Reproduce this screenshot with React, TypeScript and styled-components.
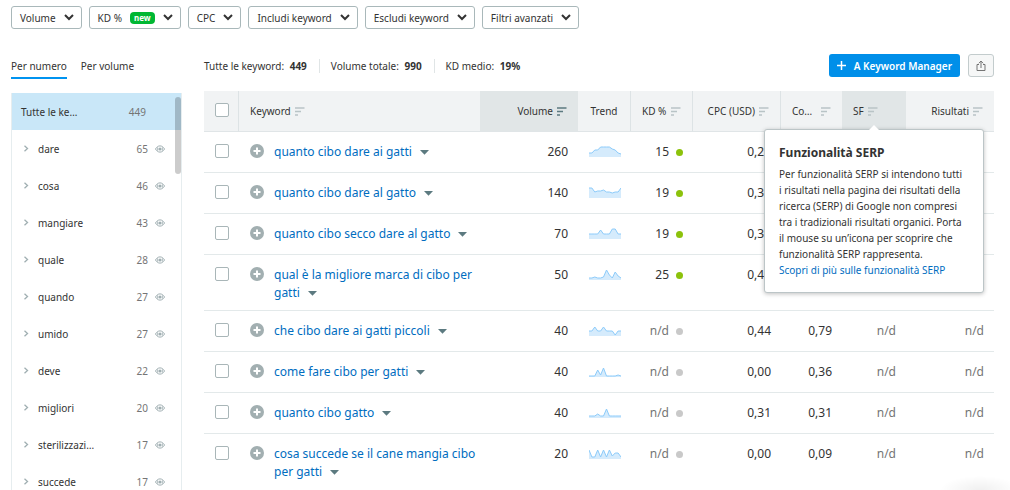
import React from "react";
import styled, { createGlobalStyle } from "styled-components";

const GlobalStyle = createGlobalStyle`
  *, *::before, *::after { box-sizing: border-box; }
  body {
    margin: 0;
    background: #fff;
    color: #333;
    font: 10px/16px "Noto Sans", "Open Sans", sans-serif;
  }
  button, input { font: inherit; color: inherit; margin: 0; }
  button { cursor: pointer; }
  a { color: #006dbf; text-decoration: none; }
`;

const Page = styled.div`
  height: 100vh;
  overflow: hidden;
  padding: 6px 16px 0 11px;
`;

const Filters = styled.div`
  display: flex;
  gap: 7px;
`;

const FilterButton = styled.button`
  display: flex;
  align-items: center;
  gap: 8px;
  height: 23px;
  padding: 0 7px 0 8px;
  border: 1px solid #a9b8ba;
  border-radius: 3px;
  background: #fff;
  white-space: nowrap;
`;

const NewBadge = styled.span`
  padding: 0 4px;
  border-radius: 4px;
  background: #00b733;
  color: #fff;
  font-size: 8px;
  font-weight: 700;
  line-height: 12px;
`;

const Content = styled.div`
  display: flex;
  align-items: flex-start;
  gap: 22px;
  margin-top: 25px;
`;

const Sidebar = styled.aside`
  flex: 0 0 171px;
`;

const Tabs = styled.div`
  display: flex;
  gap: 14px;
`;

const Tab = styled.button<{ $active?: boolean }>`
  height: 25px;
  padding: 0;
  border: 0;
  border-bottom: 2px solid ${(p) => (p.$active ? "#0093f0" : "transparent")};
  background: none;
`;

const GroupPanel = styled.div`
  position: relative;
  margin-top: 14px;
  border: 1px solid #e6edef;
  border-top: 0;
`;

const ScrollThumb = styled.span`
  position: absolute;
  top: 4px;
  right: 0;
  width: 6px;
  height: 77px;
  border-radius: 3px;
  background: rgba(0, 0, 0, 0.2);
`;

const GroupList = styled.ul`
  margin: 0;
  padding: 0;
  list-style: none;
`;

const GroupItem = styled.li<{ $selected?: boolean }>`
  display: flex;
  align-items: center;
  height: 37px;
  padding: 0 ${(p) => (p.$selected ? 35 : 16)}px 0 ${(p) => (p.$selected ? 9 : 11)}px;
  background: ${(p) => (p.$selected ? "#c9e7f8" : "#fff")};
`;

const GroupName = styled.span`
  flex: 1;
`;

const GroupCount = styled.span`
  color: #757575;
`;

const IconButton = styled.button`
  display: flex;
  padding: 0;
  border: 0;
  background: none;
`;

const ExpandButton = styled(IconButton)`
  width: 15px;
`;

const HideButton = styled(IconButton)`
  margin-left: 7px;
`;

const Main = styled.main`
  flex: 1;
  min-width: 0;
`;

const Toolbar = styled.div`
  display: flex;
  align-items: center;
  height: 23px;
  margin-bottom: 14px;
`;

const Stat = styled.span`
  line-height: 14px;
  white-space: nowrap;

  & + & {
    margin-left: 12px;
    padding-left: 11px;
    border-left: 1px solid #e0e5e6;
  }

  b { margin-left: 3px; }
`;

const PrimaryButton = styled.button`
  display: flex;
  align-items: center;
  gap: 8px;
  height: 23px;
  margin-left: auto;
  padding: 0 8px;
  border: 0;
  border-radius: 3px;
  background: #008fe9;
  color: #fff;
  font-weight: 600;
`;

const ExportButton = styled.button`
  display: flex;
  align-items: center;
  justify-content: center;
  width: 26px;
  height: 23px;
  margin-left: 8px;
  padding: 0;
  border: 1px solid #c3cccd;
  border-radius: 3px;
  background: #f6f7f7;
`;

const Table = styled.table`
  width: 100%;
  table-layout: fixed;
  border-collapse: separate;
  border-spacing: 0;
`;

const Col = styled.col<{ $width?: number }>`
  width: ${(p) => (p.$width ? `${p.$width}px` : "auto")};
`;

const HeadCell = styled.th<{ $shade?: boolean; $divider?: boolean }>`
  position: relative;
  height: 41px;
  padding: 0 11px;
  border-bottom: 1px solid #e0e5e7;
  border-right: ${(p) => (p.$divider ? "1px solid #dde3e5" : "0")};
  background: ${(p) => (p.$shade ? "#e1e6e7" : "#f1f3f4")};
  font-weight: 400;
  text-align: left;
`;

const HeadLabel = styled.div<{ $justify?: string }>`
  display: flex;
  align-items: center;
  justify-content: ${(p) => p.$justify || "flex-start"};
  gap: 4px;
  white-space: nowrap;
`;

const Cell = styled.td<{ $muted?: boolean; $right?: boolean }>`
  height: 41px;
  padding: 11px 10px 8px 11px;
  border-bottom: 1px solid #e3e9ea;
  color: ${(p) => (p.$muted ? "#757575" : "#333")};
  font-size: 12px;
  line-height: 18px;
  text-align: ${(p) => (p.$right ? "right" : "left")};
  vertical-align: top;
  white-space: nowrap;

  tr:last-child > & { border-bottom-color: transparent; }
`;

const KeywordCell = styled(Cell)`
  padding-right: 4px;
  white-space: normal;
`;

const CheckBox = styled.input.attrs({ type: "checkbox" })`
  display: block;
  appearance: none;
  width: 14px;
  height: 14px;
  margin: 1px 0 0;
  border: 1px solid #a9b6b8;
  border-radius: 2px;
  background: #fff;

  th > & { margin: 0 0 3px; }
`;

const KeywordLine = styled.div`
  display: flex;
  align-items: flex-start;
  gap: 10px;
`;

const AddButton = styled(IconButton)`
  margin-top: 1px;
`;

const KeywordLink = styled.a`
  font-weight: 400;
`;

const MenuButton = styled.button`
  display: inline-flex;
  margin-left: 8px;
  padding: 0;
  border: 0;
  background: none;
  vertical-align: middle;
`;

const Difficulty = styled.span`
  display: flex;
  align-items: center;
  justify-content: flex-end;
  gap: 7px;
`;

const Dot = styled.i<{ $known: boolean }>`
  width: 7px;
  height: 7px;
  border-radius: 50%;
  background: ${(p) => (p.$known ? "#8cc20b" : "#c9c9c9")};
`;

const TrendSvg = styled.svg`
  display: block;
  margin-top: 3px;
`;

const Tooltip = styled.div`
  position: absolute;
  z-index: 2;
  top: 38px;
  left: 50%;
  width: 220px;
  padding: 14px 12px 14px 14px;
  border: 1px solid #bcc5c7;
  border-radius: 3px;
  background: #fff;
  box-shadow: 0 1px 4px rgba(0, 0, 0, 0.25);
  transform: translateX(-50%);
  white-space: nowrap;

  &::before {
    content: "";
    position: absolute;
    top: -5px;
    left: 50%;
    border: 5px solid transparent;
    border-top: 0;
    border-bottom-color: #fff;
    transform: translateX(-50%);
  }

  h2 {
    margin: 0 0 4px;
    font-size: 12px;
    font-weight: 700;
    line-height: 18px;
  }

  p { margin: 0; }
`;

const CornerGlow = styled.div`
  position: fixed;
  right: 0;
  bottom: 0;
  width: 80px;
  height: 16px;
  background: radial-gradient(ellipse 40px 14px at 50px 16px, rgba(0, 0, 0, 0.06), transparent);
  pointer-events: none;
`;

const Chevron = () => (
  <svg width="10" height="7" viewBox="0 0 10 7" fill="none" stroke="#333" strokeWidth="2">
    <path d="M1 1l4 4 4-4" />
  </svg>
);

const SortIcon = ({ active }: { active?: boolean }) => (
  <svg width="10" height="9" viewBox="0 0 10 9" fill="none" stroke={active ? "#5c7a80" : "#b9c4c6"} strokeWidth="1.4">
    <path d="M0 1h9.5M0 4.5h6M0 8h3" />
  </svg>
);

const EyeIcon = () => (
  <svg width="10" height="8" viewBox="0 0 10 8" fill="none" stroke="#a0afb2">
    <path d="M.5 4C1.6 2 3.1.9 5 .9S8.400 2 9.500 4C8.400 6 6.900 7.100 5 7.100S1.600 6 .5 4z" />
    <circle cx="5" cy="4" r="1.6" fill="#a0afb2" stroke="none" />
    <path d="M2.600 2.200v3.600M7.400 2.200v3.600" strokeWidth=".8" />
  </svg>
);

const PlusCircle = () => (
  <svg width="14" height="14" viewBox="0 0 14 14">
    <circle cx="7" cy="7" r="7" fill="#a2afb1" />
    <path d="M7 3.500v7M3.500 7h7" stroke="#fff" strokeWidth="2" />
  </svg>
);

const Trend = ({ values }: { values: number[] }) => {
  const line = values.map((y, i) => `${((i * 32) / 11).toFixed(1)} ${y}`).join("L");
  return (
    <TrendSvg width="32" height="12" viewBox="0 0 32 12">
      <path d={`M${line}V11H0Z`} fill="#d5ebfc" />
      <path d={`M${line}`} fill="none" stroke="#8ccbfa" strokeLinejoin="round" />
    </TrendSvg>
  );
};

const filters = ["Volume", "KD %", "CPC", "Includi keyword", "Escludi keyword", "Filtri avanzati"];

const groups: [string, number][] = [
  ["dare", 65],
  ["cosa", 46],
  ["mangiare", 43],
  ["quale", 28],
  ["quando", 27],
  ["umido", 27],
  ["deve", 22],
  ["migliori", 20],
  ["sterilizzazi…", 17],
  ["succede", 17],
];

type Row = {
  keyword: string;
  volume: number;
  trend: number[];
  kd: string;
  cpc: string;
  com?: string;
  sf?: string;
  results?: string;
};

const ND = "n/d";

const rows: Row[] = [
  { keyword: "quanto cibo dare ai gatti", volume: 260, trend: [7, 7, 4, 4, 1, 1, 1, 1, 3, 4, 7, 8], kd: "15", cpc: "0,21" },
  { keyword: "quanto cibo dare al gatto", volume: 140, trend: [1, 1, 5, 4, 4, 3, 5, 5, 6, 5, 5, 1], kd: "19", cpc: "0,31" },
  { keyword: "quanto cibo secco dare al gatto", volume: 70, trend: [6, 6, 6, 6, 2, 6, 6, 6, 1, 1, 6, 6], kd: "19", cpc: "0,31" },
  { keyword: "qual è la migliore marca di cibo per gatti", volume: 50, trend: [9, 9, 8, 9, 9, 8, 1, 6, 9, 3, 7, 9], kd: "25", cpc: "0,41" },
  { keyword: "che cibo dare ai gatti piccoli", volume: 40, trend: [6, 6, 2, 6, 6, 2, 6, 6, 6, 10, 6, 6], kd: ND, cpc: "0,44", com: "0,79", sf: ND, results: ND },
  { keyword: "come fare cibo per gatti", volume: 40, trend: [10, 10, 10, 4, 9, 2, 10, 10, 10, 10, 9, 10], kd: ND, cpc: "0,00", com: "0,36", sf: ND, results: ND },
  { keyword: "quanto cibo gatto", volume: 40, trend: [9, 9, 9, 7, 9, 9, 2, 9, 9, 9, 9, 9], kd: ND, cpc: "0,31", com: "0,31", sf: ND, results: ND },
  { keyword: "cosa succede se il cane mangia cibo per gatti", volume: 20, trend: [2, 9, 9, 2, 9, 2, 9, 2, 8, 5, 5, 9], kd: ND, cpc: "0,00", com: "0,09", sf: ND, results: ND },
];

export default function App() {
  return (
    <Page>
      <GlobalStyle />
      <Filters>
        {filters.map((label) => (
          <FilterButton key={label}>
            {label}
            {label === "KD %" && <NewBadge>new</NewBadge>}
            <Chevron />
          </FilterButton>
        ))}
      </Filters>
      <Content>
        <Sidebar>
          <Tabs>
            <Tab $active>Per numero</Tab>
            <Tab>Per volume</Tab>
          </Tabs>
          <GroupPanel>
            <GroupList>
              <GroupItem $selected>
                <GroupName>Tutte le ke…</GroupName>
                <GroupCount>449</GroupCount>
              </GroupItem>
              {groups.map(([name, count]) => (
                <GroupItem key={name}>
                  <ExpandButton aria-label={`Espandi ${name}`}>
                    <svg width="6" height="7" viewBox="0 0 6 7" fill="none" stroke="#a0afb2" strokeWidth="1.3">
                      <path d="M1.500 .8l3 2.700-3 2.700" />
                    </svg>
                  </ExpandButton>
                  <GroupName>{name}</GroupName>
                  <GroupCount>{count}</GroupCount>
                  <HideButton aria-label={`Nascondi ${name}`}>
                    <EyeIcon />
                  </HideButton>
                </GroupItem>
              ))}
            </GroupList>
            <ScrollThumb />
          </GroupPanel>
        </Sidebar>
        <Main>
          <Toolbar>
            <Stat>Tutte le keyword: <b>449</b></Stat>
            <Stat>Volume totale: <b>990</b></Stat>
            <Stat>KD medio: <b>19%</b></Stat>
            <PrimaryButton>
              <svg width="9" height="9" viewBox="0 0 9 9" stroke="#fff" strokeWidth="1.500">
                <path d="M4.500 0v9M0 4.500h9" />
              </svg>
              A Keyword Manager
            </PrimaryButton>
            <ExportButton aria-label="Esporta">
              <svg width="10" height="11" viewBox="0 0 10 11" fill="none" stroke="#757575">
                <path d="M3 4.500H1v6h8v-6H7M5 8V1.500M2.800 3.300L5 1l2.200 2.300" />
              </svg>
            </ExportButton>
          </Toolbar>
          <Table>
            <colgroup>
              <Col $width={35} />
              <Col />
              <Col $width={98} />
              <Col $width={53} />
              <Col $width={62} />
              <Col $width={88} />
              <Col $width={61} />
              <Col $width={64} />
              <Col $width={88} />
            </colgroup>
            <thead>
              <tr>
                <HeadCell $divider>
                  <CheckBox aria-label="Seleziona tutte" />
                </HeadCell>
                <HeadCell>
                  <HeadLabel>Keyword <SortIcon /></HeadLabel>
                </HeadCell>
                <HeadCell $shade>
                  <HeadLabel $justify="flex-end">Volume <SortIcon active /></HeadLabel>
                </HeadCell>
                <HeadCell $divider>
                  <HeadLabel $justify="center">Trend</HeadLabel>
                </HeadCell>
                <HeadCell $divider>
                  <HeadLabel $justify="space-between">KD % <SortIcon /></HeadLabel>
                </HeadCell>
                <HeadCell $divider>
                  <HeadLabel $justify="flex-end">CPC (USD) <SortIcon /></HeadLabel>
                </HeadCell>
                <HeadCell>
                  <HeadLabel $justify="space-between">Co… <SortIcon /></HeadLabel>
                </HeadCell>
                <HeadCell $shade>
                  <HeadLabel>SF <SortIcon /></HeadLabel>
                  <Tooltip role="tooltip">
                    <h2>Funzionalità SERP</h2>
                    <p>
                      Per funzionalità SERP si intendono tutti<br />
                      i risultati nella pagina dei risultati della<br />
                      ricerca (SERP) di Google non compresi<br />
                      tra i tradizionali risultati organici. Porta<br />
                      il mouse su un’icona per scoprire che<br />
                      funzionalità SERP rappresenta.
                    </p>
                    <a href="#serp">Scopri di più sulle funzionalità SERP</a>
                  </Tooltip>
                </HeadCell>
                <HeadCell>
                  <HeadLabel $justify="flex-end">Risultati <SortIcon /></HeadLabel>
                </HeadCell>
              </tr>
            </thead>
            <tbody>
              {rows.map((row) => (
                <tr key={row.keyword}>
                  <Cell>
                    <CheckBox aria-label={`Seleziona ${row.keyword}`} />
                  </Cell>
                  <KeywordCell>
                    <KeywordLine>
                      <AddButton aria-label={`Aggiungi ${row.keyword}`}>
                        <PlusCircle />
                      </AddButton>
                      <span>
                        <KeywordLink href="#keyword">{row.keyword}</KeywordLink>
                        <MenuButton aria-label="Altro">
                          <svg width="9" height="5" viewBox="0 0 9 5" fill="#5c7a80">
                            <path d="M0 0h9L4.500 4.800z" />
                          </svg>
                        </MenuButton>
                      </span>
                    </KeywordLine>
                  </KeywordCell>
                  <Cell $right>{row.volume}</Cell>
                  <Cell>
                    <Trend values={row.trend} />
                  </Cell>
                  <Cell $muted={row.kd === ND}>
                    <Difficulty>
                      {row.kd}
                      <Dot $known={row.kd !== ND} />
                    </Difficulty>
                  </Cell>
                  <Cell $right>{row.cpc}</Cell>
                  <Cell $right>{row.com}</Cell>
                  <Cell $right $muted>{row.sf}</Cell>
                  <Cell $right $muted>{row.results}</Cell>
                </tr>
              ))}
            </tbody>
          </Table>
        </Main>
      </Content>
      <CornerGlow />
    </Page>
  );
}
